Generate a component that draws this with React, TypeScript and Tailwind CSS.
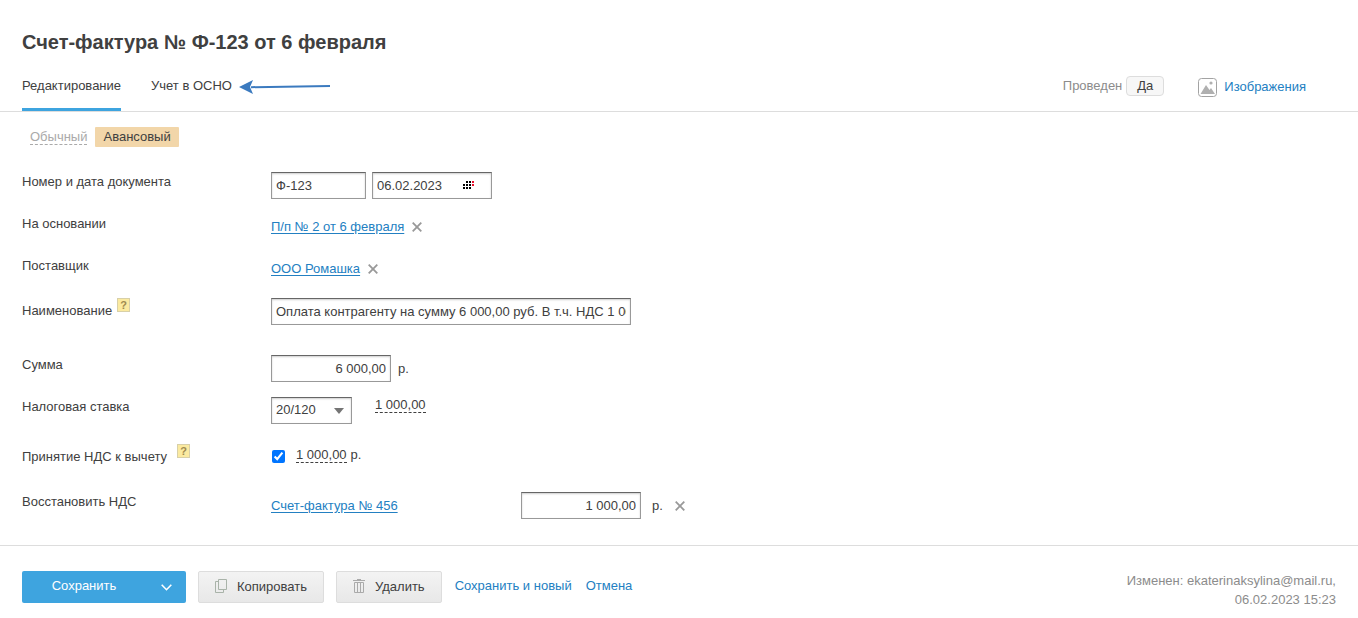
import React, { useState } from 'react';
import clsx from 'clsx';

const inputClass =
  'h-[27px] border border-[#999] border-t-[#666] bg-white px-1 text-[13px] text-[#404040] shadow-[inset_0_1px_2px_rgba(0,0,0,0.2)] outline-none';

const linkClass = 'text-[#2380c2] underline underline-offset-2';

const dashedClass = 'border-b border-dashed border-[#404040] leading-[15px]';

const greyButtonClass =
  'ml-3 flex h-8 items-center gap-[10px] rounded-[2px] border border-[#ddd] bg-linear-to-b from-[#f3f3f3] to-[#e8e8e8] px-4';

const CloseIcon: React.FC = () => (
  <svg width="10" height="10" viewBox="0 0 10 10" stroke="#999" strokeWidth="1.8" fill="none">
    <path d="M0.700 0.700l8.600 8.600M9.300 0.700L0.700 9.300" />
  </svg>
);

const RemoveButton: React.FC<{ label: string }> = ({ label }) => (
  <button type="button" aria-label={label} className="flex size-[10px] items-center justify-center">
    <CloseIcon />
  </button>
);

const HelpButton: React.FC = () => (
  <button
    type="button"
    className="flex h-[14px] w-[13px] items-center justify-center border border-[#d8d0a8] bg-[#fbeaa0] text-[11px] leading-3 font-bold text-[#a08a50]"
  >
    ?
  </button>
);

const ImageIcon: React.FC = () => (
  <svg width="19" height="19" viewBox="0 0 19 19" fill="none">
    <rect x="0.5" y="0.5" width="18" height="18" rx="3" stroke="#a3a3a3" />
    <path d="M2.500 16L8 7l3.500 5 1.500-2 4 6z" fill="#b0b0b0" />
    <circle cx="13" cy="5" r="1.6" fill="#b0b0b0" />
  </svg>
);

const CalendarIcon: React.FC = () => (
  <svg width="11" height="8" viewBox="0 0 11 8" shapeRendering="crispEdges">
    <path
      d="M3 0h2v2H3zM6 0h2v2H6zM0 3h2v2H0zM3 3h2v2H3zM6 3h2v2H6zM0 6h2v2H0zM3 6h2v2H3zM6 6h2v2H6z"
      fill="#000"
    />
    <path d="M9 0h2v2H9zM9 3h2v2H9z" fill="#e8112d" />
  </svg>
);

const CopyIcon: React.FC = () => (
  <svg width="12" height="14" viewBox="0 0 12 14" fill="none" stroke="#a9b3a9">
    <path d="M3.500 0.500h8v10h-8z" />
    <path d="M3 2.500H0.500v11h8V11" />
  </svg>
);

const TrashIcon: React.FC = () => (
  <svg width="12" height="14" viewBox="0 0 12 14" fill="none" stroke="#aaa">
    <path d="M0 1.500h12M4 0.500h4M1.500 3.500h9v10h-9zM4.500 4v9M7.500 4v9" />
  </svg>
);

interface RowProps {
  label: string;
  htmlFor?: string;
  help?: boolean;
  className?: string;
  labelClassName?: string;
  children: React.ReactNode;
}

const Row: React.FC<RowProps> = ({ label, htmlFor, help, className, labelClassName, children }) => (
  <div className={clsx('flex items-start', className)}>
    <div className={clsx('flex w-[249px] shrink-0', labelClassName)}>
      {htmlFor ? (
        <label htmlFor={htmlFor} className={clsx(help && 'pt-[3px]')}>
          {label}
        </label>
      ) : (
        <span>{label}</span>
      )}
      {help && <HelpButton />}
    </div>
    <div className="flex min-h-[27px] items-center">{children}</div>
  </div>
);

const App: React.FC = () => {
  const [accepted, setAccepted] = useState(true);

  return (
    <div className="bg-white font-['Liberation_Sans',Arial,sans-serif] text-[13px] leading-5 text-[#404040]">
      <header className="border-b border-[#ddd] px-[22px] pt-[30px]">
        <h1 className="text-xl leading-6 font-bold">Счет-фактура № Ф-123 от 6 февраля</h1>

        <div className="mt-[22px] flex items-start justify-between">
          <nav className="flex items-start">
            <a href="#edit" className="border-b-3 border-[#3ea4df] pb-3">
              Редактирование
            </a>
            <a href="#osno" className="ml-[30px]">
              Учет в ОСНО
            </a>
            <svg className="mt-[3px] ml-[7px]" width="92" height="15" viewBox="0 0 92 15">
              <path d="M12 8.200L91 7" stroke="#3b7abf" strokeWidth="2" />
              <path d="M0 8L14 1l-3 7 3 7z" fill="#3b7abf" />
            </svg>
          </nav>

          <div className="mr-[30px] flex items-start">
            <span className="text-[#8c8c8c]">Проведен</span>
            <button
              type="button"
              className="ml-1 h-5 w-[38px] rounded border border-[#ddd] bg-[#f7f7f7] leading-[18px]"
            >
              Да
            </button>
            <a href="#images" className="ml-[34px] flex items-center gap-[7px] pt-px text-[#2380c2]">
              <ImageIcon />
              Изображения
            </a>
          </div>
        </div>
      </header>

      <main className="px-[22px] pt-[15px]">
        <div className="flex items-start px-2">
          <button type="button" className="border-b border-dashed border-[#aaa] pt-[2px] leading-[15px] text-[#aaa]">
            Обычный
          </button>
          <button type="button" className="ml-2 rounded-[1px] bg-[#f2d6a9] px-2 leading-5">
            Авансовый
          </button>
        </div>

        <form className="mt-[25px]">
          <Row label="Номер и дата документа" htmlFor="number" className="mb-[15px]">
            <input id="number" type="text" defaultValue="Ф-123" className={clsx(inputClass, 'w-[95px]')} />
            <div className={clsx(inputClass, 'ml-[6px] flex w-[120px] items-center')}>
              <input
                type="text"
                aria-label="Дата документа"
                defaultValue="06.02.2023"
                className="w-[86px] bg-transparent outline-none"
              />
              <button type="button" aria-label="Календарь" className="pb-[2px]">
                <CalendarIcon />
              </button>
            </div>
          </Row>

          <Row label="На основании" className="mb-[15px]">
            <div className="flex items-center gap-2 pb-[2px]">
              <a href="#payment" className={linkClass}>
                П/п № 2 от 6 февраля
              </a>
              <RemoveButton label="Убрать основание" />
            </div>
          </Row>

          <Row label="Поставщик" className="mb-[15px]">
            <div className="flex items-center gap-2 pb-[2px]">
              <a href="#supplier" className={linkClass}>
                ООО Ромашка
              </a>
              <RemoveButton label="Убрать поставщика" />
            </div>
          </Row>

          <Row label="Наименование" htmlFor="title" help className="mb-[30px]" labelClassName="gap-[5px]">
            <input
              id="title"
              type="text"
              defaultValue="Оплата контрагенту на сумму 6 000,00 руб. В т.ч. НДС 1 000,00 руб."
              className={clsx(inputClass, 'w-[360px]')}
            />
          </Row>

          <Row label="Сумма" htmlFor="sum" className="mb-[15px]">
            <input id="sum" type="text" defaultValue="6 000,00" className={clsx(inputClass, 'w-[120px] text-right')} />
            <span className="ml-[7px]">р.</span>
          </Row>

          <Row label="Налоговая ставка" htmlFor="rate" className="mb-[15px]">
            <div className="grid items-center">
              <select
                id="rate"
                defaultValue="20/120"
                className={clsx(inputClass, 'col-start-1 row-start-1 w-[81px] appearance-none pb-[2px]')}
              >
                <option>20/120</option>
                <option>10/110</option>
              </select>
              <svg
                className="pointer-events-none col-start-1 row-start-1 mr-2 justify-self-end"
                width="10"
                height="6"
                viewBox="0 0 10 6"
              >
                <path d="M0 0h10L5 6z" fill="#757575" />
              </svg>
            </div>
            <button type="button" className={clsx(dashedClass, 'ml-[23px] self-start')}>
              1 000,00
            </button>
          </Row>

          <Row
            label="Принятие НДС к вычету"
            htmlFor="accept"
            help
            className="pt-1 pb-[22px]"
            labelClassName="gap-[10px] pt-px"
          >
            <input
              id="accept"
              type="checkbox"
              checked={accepted}
              onChange={(e) => setAccepted(e.target.checked)}
              className="ml-[1px] size-[13px]"
            />
            <div className="ml-[11px] flex items-start gap-1 pb-[3px] leading-[15px]">
              <button type="button" className={dashedClass}>
                1 000,00
              </button>
              <span>р.</span>
            </div>
          </Row>

          <Row label="Восстановить НДС" htmlFor="restore">
            <a href="#invoice" className={clsx(linkClass, 'w-[250px]')}>
              Счет-фактура № 456
            </a>
            <input
              id="restore"
              type="text"
              defaultValue="1 000,00"
              className={clsx(inputClass, 'w-[120px] text-right')}
            />
            <span className="mr-3 ml-[11px]">р.</span>
            <RemoveButton label="Убрать счет-фактуру" />
          </Row>
        </form>
      </main>

      <footer className="mt-[26px] flex items-start justify-between border-t border-[#ddd] px-[22px] pt-[25px]">
        <div className="flex items-start">
          <div className="flex h-8 overflow-hidden rounded-[2px] bg-[#3ea4df] text-white">
            <button type="button" className="w-[124px] pb-[3px]">
              Сохранить
            </button>
            <button type="button" aria-label="Другие действия" className="flex w-10 items-center justify-center">
              <svg width="11" height="7" viewBox="0 0 11 7" fill="none" stroke="#fff" strokeWidth="1.6">
                <path d="M0.700 0.700l4.800 5 4.800-5" />
              </svg>
            </button>
          </div>
          <button type="button" className={greyButtonClass}>
            <span className="pb-[3px]">
              <CopyIcon />
            </span>
            Копировать
          </button>
          <button type="button" className={greyButtonClass}>
            <span className="pb-[3px]">
              <TrashIcon />
            </span>
            Удалить
          </button>
          <div className="ml-[13px] flex gap-[14px] pt-[5px] text-[#2380c2]">
            <a href="#save-new">Сохранить и новый</a>
            <a href="#cancel">Отмена</a>
          </div>
        </div>
        <p className="text-right leading-[19px] text-[#8c8c8c]">
          Изменен: ekaterinaksylina@mail.ru,
          <br />
          06.02.2023 15:23
        </p>
      </footer>
    </div>
  );
};

export default App;
